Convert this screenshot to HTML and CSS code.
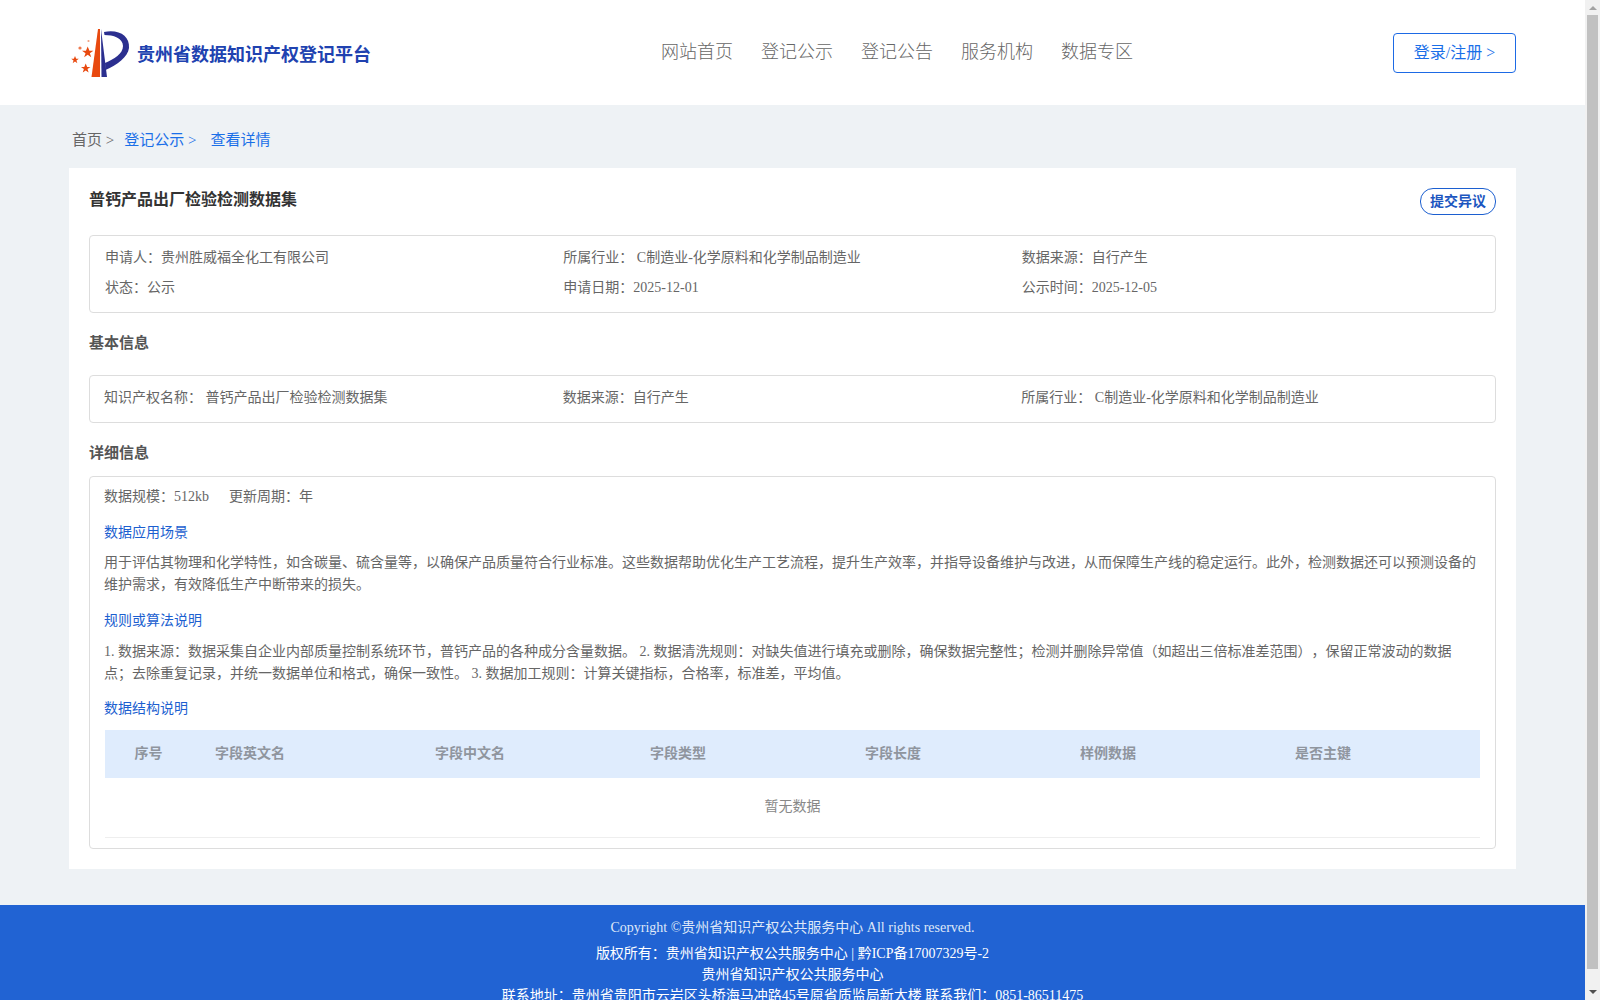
FILE: index.html
```html
<!DOCTYPE html>
<html lang="zh-CN">
<head>
    <meta charset="UTF-8">
    <title>贵州省数据知识产权登记平台</title>
    <link rel="stylesheet" href="styles.css">
</head>
<body>
    <div class="page">
        <header class="header">
            <div class="brand">
                <svg class="logo" viewBox="70 26 62 54" width="62" height="54">
                    <defs>
                        <polygon id="star" points="0,-1 0.29,-0.31 0.95,-0.31 0.36,0.12 0.59,0.81 0,0.38 -0.59,0.81 -0.36,0.12 -0.95,-0.31 -0.29,-0.31"/>
                    </defs>
                    <polygon fill="#e8490f" points="99,29 101,29 101,77 92.500,77"/>
                    <path fill="#2b2f8f" d="M102 29 L108 77 L102.500 77 Z"/>
                    <path fill="#2b2f8f" d="M105 32 C120 29 131 36 130 48 C129 57 118 65 106.500 70 L106 63 C115 59 124 54 124 46 C124 38 114 35 105.500 35 Z"/>
                    <use href="#star" fill="#e8490f" transform="translate(88.700 52.500) scale(6)"/>
                    <use href="#star" fill="#e8490f" transform="translate(76 60) scale(4)"/>
                    <use href="#star" fill="#e8490f" transform="translate(86.700 68.500) scale(5)"/>
                    <circle cx="81" cy="48" r="1.6" fill="#ee7a50"/>
                    <circle cx="89.500" cy="41" r="1.1" fill="#f0a080"/>
                </svg>
                <span class="brand-name">贵州省数据知识产权登记平台</span>
            </div>
            <nav class="nav">
                <a>网站首页</a>
                <a>登记公示</a>
                <a>登记公告</a>
                <a>服务机构</a>
                <a>数据专区</a>
            </nav>
            <a class="login-btn">登录/注册 &gt;</a>
        </header>

        <div class="breadcrumb">
            <span>首页 &gt;</span>
            <a>登记公示 &gt;</a>
            <a>查看详情</a>
        </div>

        <main class="card">
            <div class="card-top">
                <h1>普钙产品出厂检验检测数据集</h1>
                <a class="objection-btn">提交异议</a>
            </div>

            <div class="box info-box">
                <div>申请人：贵州胜威福全化工有限公司</div>
                <div>所属行业： C制造业-化学原料和化学制品制造业</div>
                <div>数据来源：自行产生</div>
                <div>状态：公示</div>
                <div>申请日期：2025-12-01</div>
                <div>公示时间：2025-12-05</div>
            </div>

            <h2>基本信息</h2>
            <div class="box info-box basic-box">
                <div>知识产权名称： 普钙产品出厂检验检测数据集</div>
                <div>数据来源：自行产生</div>
                <div>所属行业： C制造业-化学原料和化学制品制造业</div>
            </div>

            <h2 class="detail-title">详细信息</h2>
            <div class="box detail-box">
                <div class="scale-row">
                    <span>数据规模：512kb</span>
                    <span>更新周期：年</span>
                </div>

                <h3 class="first-sub">数据应用场景</h3>
                <p>用于评估其物理和化学特性，如含碳量、硫含量等，以确保产品质量符合行业标准。这些数据帮助优化生产工艺流程，提升生产效率，并指导设备维护与改进，从而保障生产线的稳定运行。此外，检测数据还可以预测设备的维护需求，有效降低生产中断带来的损失。</p>

                <h3>规则或算法说明</h3>
                <p class="rules">1. 数据来源：数据采集自企业内部质量控制系统环节，普钙产品的各种成分含量数据。 2. 数据清洗规则：对缺失值进行填充或删除，确保数据完整性；检测并删除异常值（如超出三倍标准差范围），保留正常波动的数据点；去除重复记录，并统一数据单位和格式，确保一致性。 3. 数据加工规则：计算关键指标，合格率，标准差，平均值。</p>

                <h3>数据结构说明</h3>
                <table class="field-table">
                    <colgroup>
                        <col class="col-no">
                        <col class="col-en">
                        <col class="col-std">
                        <col class="col-std">
                        <col class="col-std">
                        <col class="col-std">
                        <col>
                    </colgroup>
                    <thead>
                        <tr>
                            <th>序号</th>
                            <th>字段英文名</th>
                            <th>字段中文名</th>
                            <th>字段类型</th>
                            <th>字段长度</th>
                            <th>样例数据</th>
                            <th>是否主键</th>
                        </tr>
                    </thead>
                    <tbody>
                        <tr>
                            <td colspan="7">暂无数据</td>
                        </tr>
                    </tbody>
                </table>
            </div>
        </main>

        <footer class="footer">
            <div class="copyright">Copyright ©贵州省知识产权公共服务中心 All rights reserved.</div>
            <div>版权所有：贵州省知识产权公共服务中心 | 黔ICP备17007329号-2</div>
            <div>贵州省知识产权公共服务中心</div>
            <div>联系地址：贵州省贵阳市云岩区头桥海马冲路45号原省质监局新大楼 联系我们：0851-86511475</div>
        </footer>
    </div>

    <!-- page is cut at the window, scrollbar is drawn over the right edge -->
    <div class="scrollbar">
        <span class="arrow-up"></span>
        <span class="thumb"></span>
        <span class="arrow-down"></span>
    </div>
</body>
</html>
```

FILE: styles.css
```css
* {
    margin: 0;
    padding: 0;
    box-sizing: border-box;
}

html, body {
    height: 100%;
    overflow: hidden;
}

body {
    font-family: "Liberation Serif", "Noto Sans CJK SC", serif;
    font-size: 14px;
    color: #666;
    background-color: #eef2f5;
    text-spacing-trim: space-all;
}

.page {
    margin-right: 15px;
}

.header {
    height: 105px;
    padding: 0 69px;
    background-color: #fff;
    display: flex;
    align-items: center;
}

.brand {
    width: 302px;
    display: flex;
    align-items: center;
    gap: 6px;
}

.logo {
    flex-shrink: 0;
}

.brand-name {
    font-size: 18px;
    font-weight: bold;
    line-height: 24px;
    color: #2042b0;
    white-space: nowrap;
    margin-top: 4px;
}

.nav {
    margin-left: 290px;
    margin-bottom: 1px;
    display: flex;
    gap: 28px;
    font-size: 18px;
    line-height: 24px;
    font-weight: 300;
}

.login-btn {
    margin-left: auto;
    width: 123px;
    height: 40px;
    line-height: 38px;
    text-align: center;
    font-size: 16px;
    color: #1a6fe8;
    border: 1px solid #1d6ae5;
    border-radius: 4px;
}

.breadcrumb {
    padding: 24px 72px 17px;
    font-size: 15px;
    line-height: 22px;
    display: flex;
    gap: 10px;
}

.breadcrumb a {
    color: #1a6fe8;
}

.breadcrumb a:last-child {
    margin-left: 4px;
}

.card {
    margin: 0 69px 36px;
    padding: 20px;
    background-color: #fff;
}

.card-top {
    height: 27px;
    margin-bottom: 20px;
    display: flex;
    justify-content: space-between;
}

h1 {
    font-size: 16px;
    line-height: 24px;
    color: #333;
}

.objection-btn {
    width: 76px;
    height: 27px;
    line-height: 25px;
    text-align: center;
    font-weight: bold;
    color: #1c56c0;
    border: 1px solid #1c5fd0;
    border-radius: 13px;
}

.box {
    border: 1px solid #ddd;
    border-radius: 4px;
}

.info-box {
    padding: 12px 15px 14px;
    display: grid;
    grid-template-columns: repeat(3, 1fr);
    row-gap: 10px;
    line-height: 20px;
}

.basic-box {
    padding-left: 14px;
}

h2 {
    margin: 19px 0 21px;
    font-size: 15px;
    line-height: 22px;
    color: #555;
}

.detail-title {
    margin-bottom: 12px;
}

.detail-box {
    padding: 10px 15px 10px 14px;
    line-height: 20px;
}

.scale-row {
    display: flex;
    gap: 20px;
}

h3 {
    font-size: 14px;
    font-weight: normal;
    line-height: 20px;
    color: #1c5fd0;
}

.first-sub {
    margin-top: 16px;
}

.detail-box p {
    margin: 9px 0 15px;
    line-height: 22px;
}

.detail-box .rules {
    margin: 10px 0 14px;
    padding-right: 10px;
}

.field-table {
    width: calc(100% - 1px);
    margin: 11px 0 0 1px;
    border-collapse: collapse;
    table-layout: fixed;
}

.col-no {
    width: 87px;
}

.col-en {
    width: 220px;
}

.col-std {
    width: 215px;
}

.field-table th {
    height: 48px;
    padding-left: 23px;
    text-align: left;
    font-weight: bold;
    color: #8f959e;
    background-color: #dfecfd;
}

.field-table th:first-child {
    padding-left: 0;
    text-align: center;
}

.field-table td {
    height: 59px;
    text-align: center;
    color: #888;
    border-bottom: 1px solid #eee;
}

.footer {
    padding: 12px 0 20px;
    text-align: center;
    line-height: 21px;
    color: #fff;
    background-color: #2163d3;
}

.copyright {
    margin-bottom: 4px;
    line-height: 22px;
    color: #dfe8f8;
}

.scrollbar {
    position: fixed;
    top: 0;
    right: 0;
    bottom: 0;
    width: 15px;
    background-color: #f1f1f1;
}

.thumb {
    position: absolute;
    top: 15px;
    left: 2px;
    width: 11px;
    height: 954px;
    background-color: #c1c1c1;
}

.arrow-up,
.arrow-down {
    position: absolute;
    left: 4px;
    border-left: 4px solid transparent;
    border-right: 4px solid transparent;
}

.arrow-up {
    top: 6px;
    border-bottom: 4px solid #a3a3a3;
}

.arrow-down {
    bottom: 6px;
    border-top: 4px solid #505050;
}
```
